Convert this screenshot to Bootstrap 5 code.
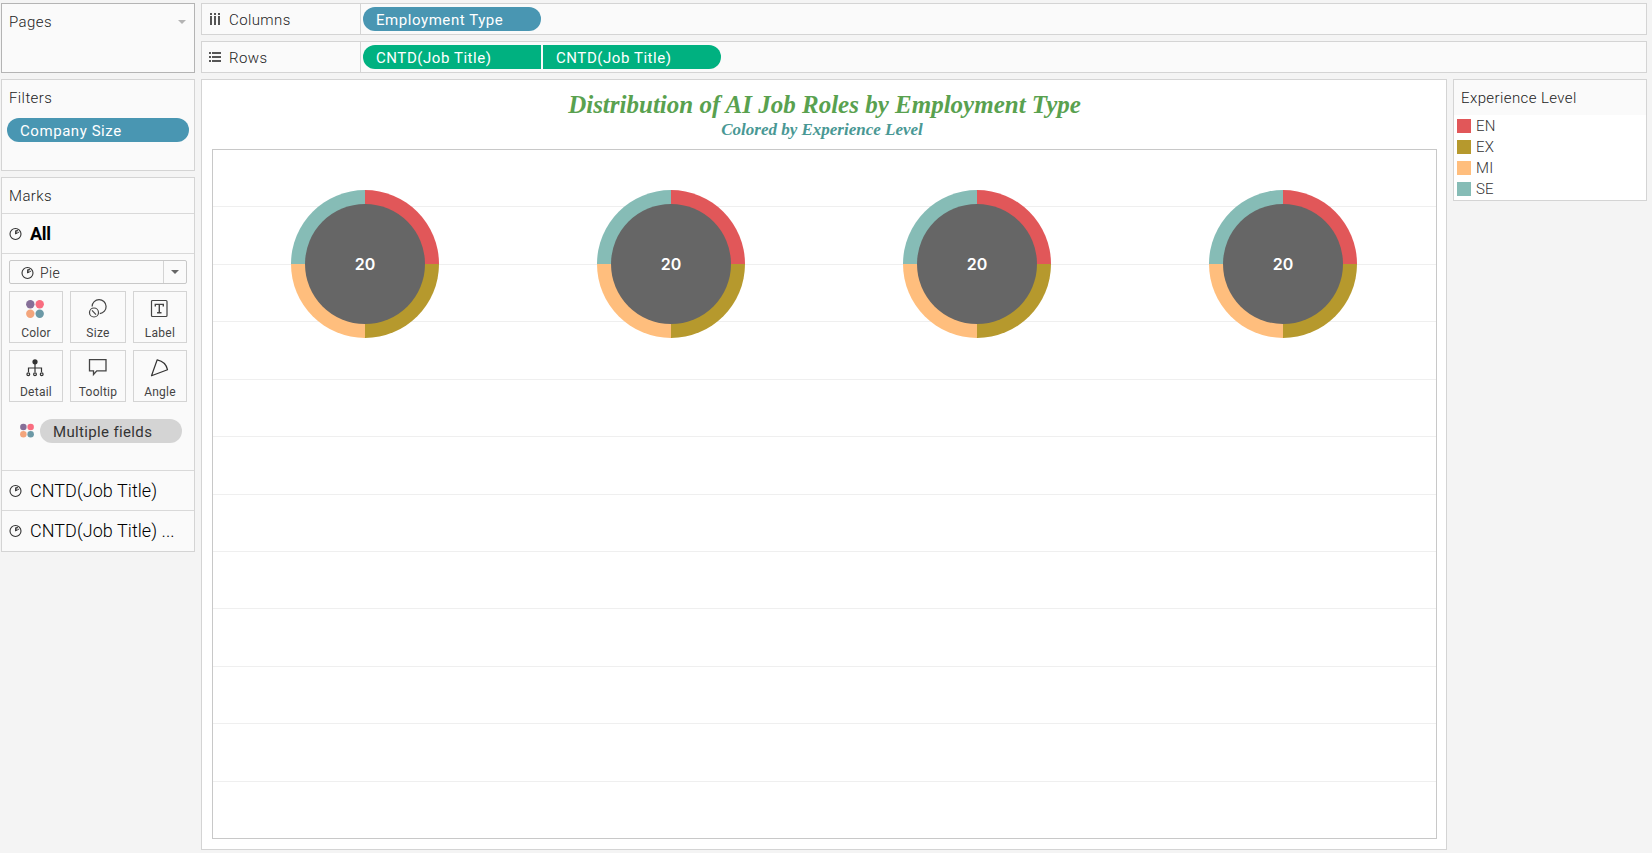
<!DOCTYPE html>
<html lang="en">
<head>
<meta charset="utf-8">
<title>AI Job Roles</title>
<link href="https://cdn.jsdelivr.net/npm/bootstrap@5.3.0/dist/css/bootstrap.min.css" rel="stylesheet">
<style>
body{background:#f4f4f4;font-family:Roboto,"Liberation Sans",sans-serif;font-size:15px;font-weight:300;line-height:20px;color:#222;letter-spacing:.4px;height:853px;overflow:hidden}
svg{display:block;flex:none}
.workspace{padding:3px 5px 3px 1px;height:853px;gap:6px}
.side{width:194px;gap:6px}
.panel{background:#fafafa;border:1px solid #d4d4d4}
.pages{height:70px;border-color:#b4b4b4;padding:8px 8px 8px 7px}
.filters{height:92px;padding:8px 5px}
.ftitle{height:30px;padding-left:2px}
.marks{height:375px}
.mtitle{height:36px;line-height:36px;padding-left:7px}
.caret{width:0;height:0;border:4px solid transparent;border-top-color:#b4b4b4;border-bottom:0}
.pill{height:24px;border-radius:12px;padding:0 13px;line-height:26px;color:#fff;font-weight:400;letter-spacing:.56px;white-space:nowrap}
.shelf .pill{width:178px;margin:3px 0}
.shelf .first{margin-left:2px;margin-right:2px}
.dim{background:#4996b2}.mea{background:#00b180}
.multi{background:#d4d4d4;color:#333;margin-left:6px;letter-spacing:.35px}
.sect{border-bottom:1px solid #d9d9d9}
.layer{height:40px;padding:0 7px;gap:8px;font-size:18px;letter-spacing:.05px;color:#000;white-space:nowrap}
.all{letter-spacing:-.3px;font-weight:700}
.picker{height:24px;border:1px solid #c8c8c8;border-radius:2px;margin:6px 7px 7px}
.picked{padding-left:11px;gap:6px;font-size:14px;padding-top:1px}
.arrowbox{width:23px;border-left:1px solid #d4d4d4}
.arrowbox .caret{border-top-color:#666}
.tools{display:grid;grid-template-columns:54px 56px 54px;gap:7px;margin:0 7px}
.tool{height:52px;border:1px solid #d4d4d4;font-size:12px;line-height:14px;color:#444;padding-top:6px;gap:6px;font-weight:400;letter-spacing:.25px}
.tool svg{margin-right:2px}
.fields{height:69px;padding:17px 12px 0 18px}
.shelf{height:32px}
.shelfname{width:159px;border-right:1px solid #d4d4d4;padding-left:6px;gap:6px}
.shelfname span{padding-top:1px}
.viz{width:1246px;background:#fff;padding:0 9px 10px 10px}
.vtitle{height:69px;padding-top:10px;font-family:"Liberation Serif",serif;font-weight:700;font-style:italic;letter-spacing:0}
.t1{font-size:25px;line-height:29px;color:#59a14f}
.t2{font-size:17px;line-height:22px;color:#499894;padding-right:5px}
.plot{height:690px;border:1px solid #c8c8c8}
.legend-card{width:194px;height:122px;background:#fff}
.lhead{height:35px;background:#fafafa;padding:8px 7px}
.key{height:21px;padding-left:3px;gap:5px;color:#333;letter-spacing:.2px}
.sw{width:14px;height:14px}
</style>
</head>
<body>
<svg width="0" height="0" class="position-absolute"><defs>
<g id="pieicon" fill="none" stroke="#333" stroke-width="1.1"><circle cx="6.5" cy="7" r="5.5"/><path d="M6.5 3.5V7L10.3 4.9M6.8 3.6H8.6M6.5 7L8.9 2.4" stroke-width=".9"/></g>
<g id="dots"><circle cx="4.3" cy="4.3" r="4.2" fill="#866f98"/><circle cx="13.7" cy="4.3" r="4.2" fill="#f96d80"/><circle cx="4.3" cy="13.7" r="4.2" fill="#f3a57c"/><circle cx="13.7" cy="13.7" r="4.2" fill="#6c99a6"/></g>
<g id="donut"><path d="M0 0V-74A74 74 0 0 1 74 0Z" fill="#e15759"/><path d="M0 0H74A74 74 0 0 1 0 74Z" fill="#b6992d"/><path d="M0 0V74A74 74 0 0 1-74 0Z" fill="#ffbe7d"/><path d="M0 0H-74A74 74 0 0 1 0-74Z" fill="#86bcb6"/><circle r="60" fill="#666"/><text y="6.4" text-anchor="middle" fill="#fff" font-family="Inter" font-weight="600" font-size="16" letter-spacing="0">20</text></g>
</defs></svg>
<main class="workspace d-flex">
<aside class="side d-flex flex-column flex-shrink-0">
  <section class="panel pages d-flex justify-content-between"><span>Pages</span><span class="caret mt-2"></span></section>
  <section class="panel filters"><div class="ftitle">Filters</div><div class="pill dim">Company Size</div></section>
  <section class="panel marks">
    <div class="sect mtitle">Marks</div>
    <div class="sect layer all d-flex align-items-center"><svg width="13" height="14"><use href="#pieicon"/></svg>All</div>
    <div class="picker d-flex"><div class="picked d-flex align-items-center flex-grow-1"><svg width="13" height="14"><use href="#pieicon"/></svg>Pie</div><div class="arrowbox d-flex align-items-center justify-content-center"><span class="caret"></span></div></div>
    <div class="tools">
      <div class="tool d-flex flex-column align-items-center"><svg width="20" height="22" viewBox="-1 -2 20 22"><use href="#dots"/></svg>Color</div>
      <div class="tool d-flex flex-column align-items-center"><svg width="20" height="22" fill="none" stroke="#444" stroke-width="1.2"><path d="M5.1 8.4A7 7 0 1 1 12.8 15.6"/><circle cx="7" cy="14.5" r="4.5"/><path d="M5 12.4l4 4.2"/></svg>Size</div>
      <div class="tool d-flex flex-column align-items-center"><svg width="20" height="22" fill="none" stroke="#444" stroke-width="1.2"><rect x="2.5" y="2.5" width="15.5" height="16" rx="1"/><path d="M6.3 8.5V6.4h8v2.1M10.3 6.4v8.2M8.1 14.7h4.4" stroke-width="1.4"/></svg>Label</div>
      <div class="tool d-flex flex-column align-items-center"><svg width="20" height="22" fill="none" stroke="#333" stroke-width="1.2"><circle cx="10" cy="4.8" r="2.6" fill="#333" stroke="none"/><path d="M10 6v9M3.5 15v-4h13v4"/><circle cx="3.3" cy="17.2" r="1.4"/><circle cx="10" cy="17.2" r="1.4"/><circle cx="16.7" cy="17.2" r="1.4"/></svg>Detail</div>
      <div class="tool d-flex flex-column align-items-center"><svg width="20" height="22" fill="none" stroke="#444" stroke-width="1.3"><path d="M2.5 2.7H19V13.8H9.8L6.5 17.5V13.8H2.5Z"/></svg>Tooltip</div>
      <div class="tool d-flex flex-column align-items-center"><svg width="20" height="22" fill="none" stroke="#333" stroke-width="1.2" stroke-linejoin="round"><path d="M8.2 2.8L2.5 18.8L18.5 12.7C17.6 8 13.8 4 8.2 2.8Z"/></svg>Angle</div>
    </div>
    <div class="sect fields d-flex"><svg width="14" height="24" viewBox="0 -6 18 31"><use href="#dots"/></svg><div class="pill multi flex-grow-1">Multiple fields</div></div>
    <div class="sect layer d-flex align-items-center"><svg width="13" height="14"><use href="#pieicon"/></svg><span>CNTD(Job Title)</span></div>
    <div class="layer d-flex align-items-center"><svg width="13" height="14"><use href="#pieicon"/></svg><span>CNTD(Job Title) ...</span></div>
  </section>
</aside>
<div class="d-flex flex-column flex-grow-1" style="gap:6px">
  <section class="panel shelf d-flex"><div class="shelfname d-flex align-items-center"><svg width="15" height="14" fill="#555"><path d="M2 1h2v2H2zM6 1h2v2H6zM10 1h2v2h-2zM2 4h2v9H2zM6 4h2v9H6zM10 4h2v9h-2z"/></svg><span>Columns</span></div><div class="pill dim first">Employment Type</div></section>
  <section class="panel shelf d-flex"><div class="shelfname d-flex align-items-center"><svg width="15" height="14" fill="#555"><path d="M1 2h2v2H1zM4 2h9v2H4zM1 6h2v2H1zM4 6h9v2H4zM1 10h2v2H1zM4 10h9v2H4z"/></svg><span>Rows</span></div><div class="pill mea first rounded-end-0">CNTD(Job Title)</div><div class="pill mea rounded-start-0">CNTD(Job Title)</div></section>
  <div class="d-flex align-items-start" style="gap:6px">
    <section class="panel viz">
      <div class="vtitle text-center"><div class="t1">Distribution of AI Job Roles by Employment Type</div><div class="t2">Colored by Experience Level</div></div>
      <div class="plot"><svg width="1223" height="688" viewBox="0 0 1223 688">
        <path stroke="#efefef" d="M0 56.5H1223M0 114.5H1223M0 171.5H1223M0 229.5H1223M0 286.5H1223M0 344.5H1223M0 401.5H1223M0 458.5H1223M0 516.5H1223M0 573.5H1223M0 631.5H1223"/>
        <use href="#donut" x="152" y="114"/><use href="#donut" x="458" y="114"/><use href="#donut" x="764" y="114"/><use href="#donut" x="1070" y="114"/>
      </svg></div>
    </section>
    <section class="panel legend-card">
      <div class="lhead">Experience Level</div>
      <div class="key d-flex align-items-center"><span class="sw" style="background:#e15759"></span>EN</div>
      <div class="key d-flex align-items-center"><span class="sw" style="background:#b6992d"></span>EX</div>
      <div class="key d-flex align-items-center"><span class="sw" style="background:#ffbe7d"></span>MI</div>
      <div class="key d-flex align-items-center"><span class="sw" style="background:#86bcb6"></span>SE</div>
    </section>
  </div>
</div>
</main>
<script src="https://cdn.jsdelivr.net/npm/bootstrap@5.3.0/dist/js/bootstrap.bundle.min.js"></script>
</body>
</html>
